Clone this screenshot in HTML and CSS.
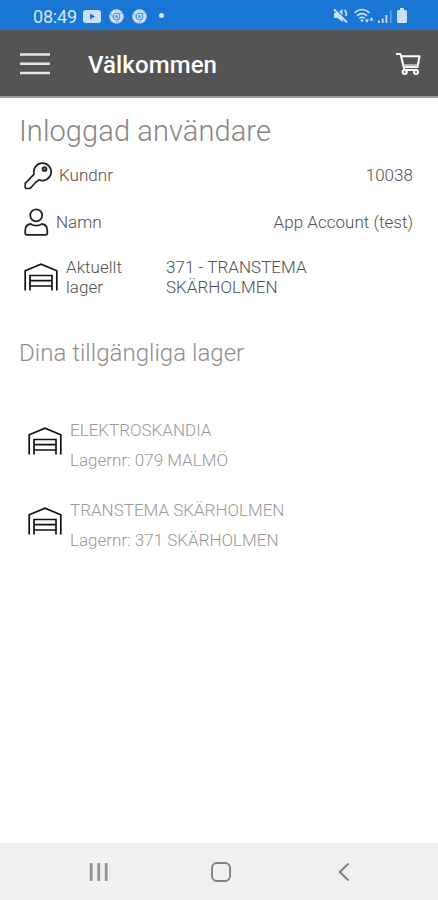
FILE: index.html
```html
<!DOCTYPE html>
<html lang="sv">
<head>
<meta charset="utf-8">
<meta name="viewport" content="width=device-width, initial-scale=1">
<title>Välkommen</title>
<link rel="stylesheet" href="styles.css">
</head>
<body>
<svg width="0" height="0" class="defs">
  <symbol id="garage" viewBox="0 0 34 28">
    <path d="M1.200 27.500V7.800L17 1.200 32.800 7.800v19.700M6 27.500V12.500h22v15M6 17.700h22M6 23h22" fill="none" stroke="currentColor" stroke-width="1.700"/>
  </symbol>
  <symbol id="chrome" viewBox="0 0 15 15">
    <circle cx="7.500" cy="7.500" r="7.200" fill="#c9e0f8"/>
    <circle cx="7.500" cy="7.500" r="3.200" fill="none" stroke="#4b95e0" stroke-width="1.100"/>
    <path d="M7.500 4.300h6M4.700 9.100l-3-5M10.300 9.100l-3 5" stroke="#4b95e0" stroke-width=".8"/>
    <circle cx="7.500" cy="7.500" r="1.500" fill="#5b9fe4"/>
  </symbol>
</svg>
<div class="screen">
  <div class="status">
    <span class="clock">08:49</span>
    <svg class="youtube" width="18" height="13" viewBox="0 0 18 13"><rect width="18" height="13" rx="3" fill="#c9e0f8"/><path d="M7 3.500v6l5-3z" fill="#1976d5"/></svg>
    <svg class="chrome" width="15" height="15"><use href="#chrome"/></svg>
    <svg class="chrome" width="15" height="15"><use href="#chrome"/></svg>
    <span class="dot"></span>
    <svg class="signals" width="76" height="18" viewBox="0 0 76 18" fill="#c9e0f8">
      <path d="M1 6h3.500l5-4v13l-5-4H1z"/>
      <path d="M11.500 3q2.500 2 1.500 6" fill="none" stroke="#c9e0f8" stroke-width="1.800"/>
      <path d="M2.500 2l12 12" stroke="#1976d5" stroke-width="1.200"/>
      <path d="M1 2.500l13 13" stroke="#c9e0f8" stroke-width="1.900"/>
      <g fill="none" stroke="#c9e0f8" stroke-width="1.600"><path d="M21.500 6q7.500-7 15 0M24 8.800q5-4.400 10 0M26.400 11.300q2.600-2 5.200 0"/></g>
      <circle cx="29" cy="13.500" r="1.300"/>
      <path d="M32 12.500h4l-2 3.500zM36.500 13.500l2-3.500 2 3.500z"/>
      <path d="M45 13.500h1.700V16H45zM48.800 11.500h1.800V16h-1.800zM52.500 8h1.800v8h-1.800z"/>
      <path d="M57 3.500h1.500V16H57z" opacity=".45"/>
      <path d="M67 1h4v2h1.500q1.500 0 1.500 1.500v10q0 1.500-1.500 1.500h-7q-1.500 0-1.500-1.500v-10Q64 3 65.500 3H67z"/>
    </svg>
  </div>
  <header class="bar">
    <svg class="menu" width="30" height="24" viewBox="0 0 30 24"><path d="M0 2.500h30M0 11.700h30M0 21h30" stroke="#e8e4e2" stroke-width="2.600"/></svg>
    <h1>Välkommen</h1>
    <svg class="cart" width="27" height="24" viewBox="0 0 27 24" fill="none" stroke="#fff" stroke-width="2.100" stroke-linejoin="round">
      <path d="M1 2h4.500l4 16h12M6.500 4.200h18L22.500 15H9"/>
      <path d="M9.500 13.200h12.500" stroke="#bbb" stroke-width="2.200"/>
      <circle cx="9.700" cy="20" r="2"/><circle cx="21" cy="20" r="2"/>
    </svg>
  </header>
  <main>
    <h2 class="user-title">Inloggad användare</h2>
    <section class="info">
      <div class="row key-row">
        <svg width="28" height="29" viewBox="0 0 28 29" fill="none" stroke="#222" stroke-width="1.700" stroke-linejoin="round"><path d="M10.100 13.200A8.700 8.700 0 1 1 15 18.800L11.500 21.500 7.500 26Q6.500 27.500 4.500 27.500H2.500Q1.200 27.500 1.200 26V22.300L10.100 13.200z"/><circle cx="20.500" cy="8" r="2" fill="#777"/></svg>
        <span class="label">Kundnr</span><span class="value">10038</span>
      </div>
      <div class="row name-row">
        <svg width="25" height="28" viewBox="0 0 25 28" fill="none" stroke="#222" stroke-width="1.800"><circle cx="12.200" cy="7.300" r="6"/><path d="M6.500 16C3 16.500 1.200 19 1.200 22.500V25q0 1.800 1.800 1.800h18.500q1.800 0 1.800-1.800v-2.500c0-3.500-1.800-6-5.300-6.500-3.500 2-8 2-11.500 0z"/></svg>
        <span class="label">Namn</span><span class="value">App Account (test)</span>
      </div>
      <div class="row stock-row">
        <svg class="garage" width="34" height="28"><use href="#garage"/></svg>
        <span class="stock">Aktuellt<br>lager</span><span class="place">371 - TRANSTEMA<br>SKÄRHOLMEN</span>
      </div>
    </section>
    <h2 class="stock-title">Dina tillgängliga lager</h2>
    <ul class="stocks">
      <li><svg class="garage" width="34" height="28"><use href="#garage"/></svg><div><p>ELEKTROSKANDIA</p><p>Lagernr: 079 MALMÖ</p></div></li>
      <li><svg class="garage" width="34" height="28"><use href="#garage"/></svg><div><p>TRANSTEMA SKÄRHOLMEN</p><p>Lagernr: 371 SKÄRHOLMEN</p></div></li>
    </ul>
  </main>
  <nav>
    <svg width="20" height="20" viewBox="0 0 20 20"><path d="M2.200 1v18M9.700 1v18M17.200 1v18" stroke="#929292" stroke-width="2.800"/></svg>
    <svg class="home" width="20" height="20" viewBox="0 0 20 20"><rect x="1" y="1" width="18" height="18" rx="5" fill="none" stroke="#808080" stroke-width="1.900"/></svg>
    <svg class="back" width="12" height="20" viewBox="0 0 12 20"><path d="M10.500 1.500L1.800 10l8.700 8.500" fill="none" stroke="#808080" stroke-width="2"/></svg>
  </nav>
</div>
</body>
</html>
```
FILE: styles.css
```css
* { box-sizing: border-box; margin: 0; padding: 0; }
body { font-family: Roboto, sans-serif; font-weight: 300; background: #fff; }
svg { flex: none; display: block; }
.defs { position: absolute; }
.screen { height: 900px; display: flex; flex-direction: column; overflow: hidden; }

.status { height: 30px; background: #1976d5; display: flex; align-items: center; padding: 2px 29px 0 33px; }
.clock { width: 50px; font-size: 18px; font-weight: 400; color: #d5e7fa; letter-spacing: -.2px; }
.chrome { margin-left: 8px; }
.dot { width: 5px; height: 5px; border-radius: 50%; background: #d5e7fa; margin: 0 0 2px 12px; }
.signals { margin-left: auto; }

.bar { height: 68px; background: #545454; border-bottom: 2px solid #999; display: flex; align-items: center; padding: 2px 16px 0 20px; }
.bar h1 { margin-left: 38px; font-size: 24px; font-weight: 500; color: #fff; line-height: 28px; letter-spacing: .1px; padding-top: 1px; }
.cart { margin-left: auto; }

main { flex: 1; padding: 0 25px 0 19px; }
h2 { font-weight: 300; white-space: nowrap; color: #858585; }
.user-title { font-size: 29px; line-height: 36px; padding-top: 15px; letter-spacing: .1px; }
.info { padding-left: 5px; color: #505050; font-size: 17px; letter-spacing: .03px; }
.row { display: flex; align-items: center; white-space: nowrap; }
.key-row { height: 53px; }
.key-row span { padding-bottom: 2px; }
.name-row { height: 40px; }
.label { margin-left: 7px; }
.value { margin-left: auto; }
.stock-row { height: 70px; line-height: 20px; }
.stock { width: 100px; margin-left: 8px; }
.stock-title { font-size: 24px; line-height: 30px; margin-top: 26px; color: #8e8e8e; letter-spacing: .03px; }
.stocks { list-style: none; padding: 47px 0 0 9px; color: #999; font-size: 17px; }
.stocks li { display: flex; height: 80px; }
.stocks .garage { margin-top: 12px; }
.stocks div { margin-left: 8px; }
.stocks p { height: 30px; line-height: 30px; white-space: nowrap; }
.garage { color: #111; }

nav { height: 57px; background: #f0f0f0; display: flex; align-items: center; padding-left: 89px; }
.home { margin-left: 102px; }
.back { margin-left: 107px; }
```
